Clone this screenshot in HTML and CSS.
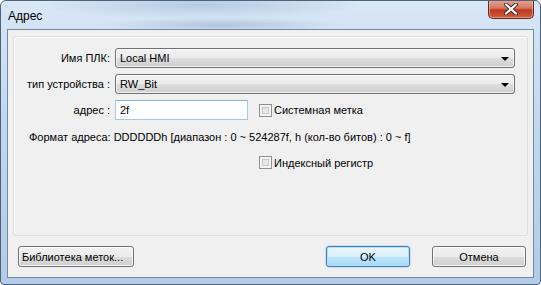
FILE: index.html
```html
<!DOCTYPE html>
<html lang="ru">
<head>
  <meta charset="UTF-8" />
  <title>Адрес</title>
  <link rel="stylesheet" href="styles.css">
</head>
<body>
  <div class="window">
    <div class="titlebar">
      <span class="title">Адрес</span>
      <button class="close" type="button" aria-label="Закрыть">
        <svg width="14" height="12" viewBox="0 0 14 12">
          <path d="M2 1.5 L12 10.5 M12 1.5 L2 10.5" stroke="#4a2a26" stroke-width="4" stroke-linecap="round"/>
          <path d="M2 1.5 L12 10.5 M12 1.5 L2 10.5" stroke="#ffffff" stroke-width="2.2" stroke-linecap="round"/>
        </svg>
      </button>
    </div>

    <div class="client">
      <div class="panel">
        <div class="row">
          <label class="label">Имя ПЛК:</label>
          <div class="combo combo-wide"><span>Local HMI</span><i class="arrow"></i></div>
        </div>
        <div class="row">
          <label class="label">тип устройства :</label>
          <div class="combo combo-wide"><span>RW_Bit</span><i class="arrow"></i></div>
        </div>
        <div class="row">
          <label class="label">адрес :</label>
          <div class="input">2f</div>
          <span class="check"><i class="box"></i>Системная метка</span>
        </div>
        <p class="format">Формат адреса: DDDDDDh [диапазон : 0 ~ 524287f, h (кол-во битов) : 0 ~ f]</p>
        <div class="row-index">
          <span class="check"><i class="box"></i>Индексный регистр</span>
        </div>
      </div>

      <div class="footer">
        <button class="btn btn-lib" type="button">Библиотека меток...</button>
        <div class="actions">
          <button class="btn btn-ok" type="button">OK</button>
          <button class="btn btn-cancel" type="button">Отмена</button>
        </div>
      </div>
    </div>
  </div>
</body>
</html>
```

FILE: styles.css
```css
body {
  margin: 0;
  font-family: 'Liberation Sans', Arial, sans-serif;
  font-size: 11px;
  color: #000;
  background: #fff;
}
.window {
  width: 541px;
  height: 285px;
  box-sizing: border-box;
  border: 1px solid #4d6379;
  border-radius: 6px 6px 4px 4px;
  background:
    radial-gradient(ellipse 160px 14px at 200px 4px, rgba(120, 150, 190, 0.35), transparent),
    radial-gradient(ellipse 120px 8px at 220px 24px, rgba(110, 140, 180, 0.35), transparent),
    linear-gradient(180deg, #d9e7f6 0%, #c3d8ef 40%, #b3cbe6 100%);
  display: flex;
  flex-direction: column;
  overflow: hidden;
}
.titlebar {
  height: 28px;
  display: flex;
  justify-content: space-between;
  align-items: flex-start;
}
.title {
  margin: 8px 0 0 7px;
  font-size: 12px;
  color: #000;
}
.close {
  width: 46px;
  height: 19px;
  margin: -1px 6px 0 0;
  padding: 0;
  border: 1px solid #5b2a22;
  border-top: none;
  border-radius: 0 0 5px 5px;
  background: linear-gradient(180deg, #e8a493 0%, #d7765f 45%, #c0391f 55%, #cf5d3c 100%);
  box-shadow: inset 0 0 0 1px rgba(255, 210, 200, 0.5);
  display: flex;
  align-items: center;
  justify-content: center;
}
.client {
  flex: 1;
  margin: 0 6px 6px 6px;
  border: 1px solid #7289a4;
  background: #f0f0f0;
  display: flex;
  flex-direction: column;
}
.panel {
  margin: 6px 5px 0 5px;
  height: 200px;
  box-sizing: border-box;
  border: 1px solid #d5dfe5;
  border-radius: 3px;
  box-shadow: inset 1px 1px 0 #fff;
  padding-top: 11px;
}
.row {
  display: flex;
  align-items: center;
  margin-bottom: 6px;
}
.label {
  width: 96px;
  text-align: right;
  margin-right: 5px;
}
.combo {
  height: 20px;
  box-sizing: border-box;
  border: 1px solid #707070;
  border-radius: 3px;
  background: linear-gradient(180deg, #f2f2f2 0%, #ebebeb 50%, #dddddd 51%, #cfcfcf 100%);
  box-shadow: inset 0 0 0 1px rgba(255, 255, 255, 0.7);
  display: flex;
  align-items: center;
  justify-content: space-between;
  padding: 0 5px 0 4px;
}
.combo-wide {
  width: 400px;
}
.arrow {
  width: 0;
  height: 0;
  border-left: 4px solid transparent;
  border-right: 4px solid transparent;
  border-top: 4px solid #000;
  margin-top: 1px;
}
.input {
  width: 133px;
  height: 20px;
  box-sizing: border-box;
  border: 1px solid #a9c6e4;
  border-top-color: #8fb1d8;
  background: #fff;
  padding: 3px 0 0 4px;
}
.check {
  display: flex;
  align-items: center;
}
.row .check {
  margin-left: 11px;
}
.box {
  width: 13px;
  height: 13px;
  box-sizing: border-box;
  border: 1px solid #8e8f8f;
  background: linear-gradient(135deg, #dcdcdc 0%, #f4f4f4 100%);
  box-shadow: inset 0 0 0 2px #f4f4f4, inset 0 0 0 3px #c6c6c6;
  margin-right: 2px;
}
.format {
  margin: 11px 0 0 15px;
}
.row-index {
  margin: 13px 0 0 245px;
}
.footer {
  display: flex;
  justify-content: space-between;
  align-items: center;
  margin: 10px 7px 0 10px;
}
.actions {
  display: flex;
  gap: 22px;
}
.btn {
  height: 21px;
  box-sizing: border-box;
  font-family: 'Liberation Sans', Arial, sans-serif;
  font-size: 11px;
  color: #000;
  border: 1px solid #707070;
  border-radius: 3px;
  background: linear-gradient(180deg, #f2f2f2 0%, #ebebeb 50%, #dddddd 51%, #cfcfcf 100%);
  box-shadow: inset 0 0 0 1px rgba(255, 255, 255, 0.8);
  padding: 0;
}
.btn-lib {
  width: 116px;
  text-align: left;
  padding-left: 3px;
}
.btn-ok {
  width: 84px;
  border-color: #3c7fb1;
  background: linear-gradient(180deg, #eaf6fd 0%, #d9f0fc 50%, #bee6fd 51%, #a7d9f5 100%);
  box-shadow: inset 0 0 0 1px #b6e0f6, 0 0 2px rgba(60, 160, 230, 0.6);
}
.btn-cancel {
  width: 94px;
}
```
